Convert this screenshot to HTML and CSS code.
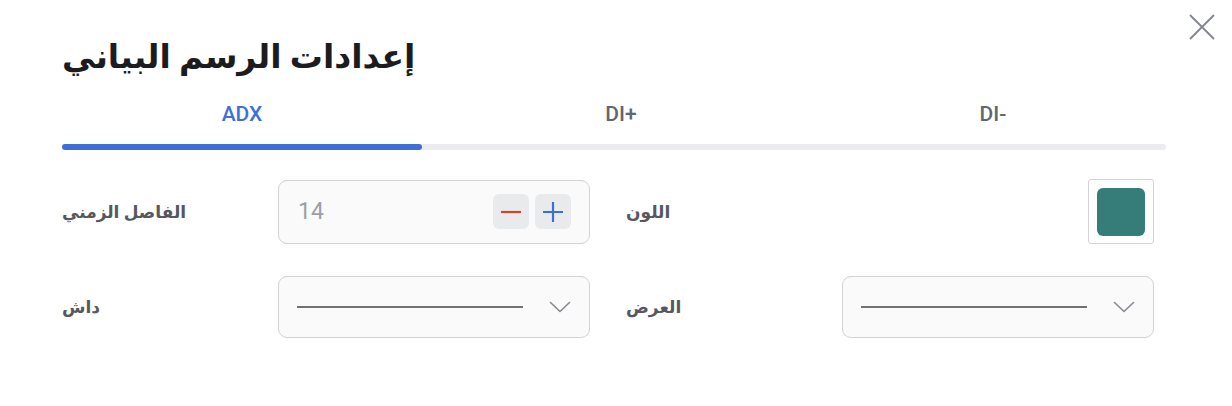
FILE: index.html
```html
<!DOCTYPE html>
<html lang="ar">
<head>
<meta charset="utf-8">
<title>إعدادات الرسم البياني</title>
<link rel="stylesheet" href="styles.css">
</head>
<body>
<div class="dialog">
  <button class="close" aria-label="إغلاق">
    <svg width="26" height="26" viewBox="0 0 26 26"><path d="M1.5 1.5 L24.5 24.5 M24.5 1.5 L1.5 24.5" stroke="#80848c" stroke-width="1.8" fill="none" stroke-linecap="round"/></svg>
  </button>
  <h1 class="title">إعدادات الرسم البياني</h1>
  <div class="tabs">
    <div class="tab active">ADX</div>
    <div class="tab">DI+</div>
    <div class="tab">DI-</div>
  </div>
  <div class="track"><div class="indicator"></div></div>
  <div class="form">
    <div class="field">
      <span class="label">الفاصل الزمني</span>
      <div class="control stepper">
        <span class="value">14</span>
        <div class="steps">
          <span class="step minus"><svg width="20" height="20" viewBox="0 0 20 20"><path d="M0 10 H20" stroke="#d1462b" stroke-width="2.2"/></svg></span>
          <span class="step plus"><svg width="20" height="20" viewBox="0 0 20 20"><path d="M0 10 H20 M10 0 V20" stroke="#3a6fd3" stroke-width="2.2"/></svg></span>
        </div>
      </div>
    </div>
    <div class="field">
      <span class="label">اللون</span>
      <div class="swatch-box"><div class="swatch"></div></div>
    </div>
    <div class="field">
      <span class="label">داش</span>
      <div class="control select">
        <span class="line"></span>
        <svg class="chev" width="22" height="12" viewBox="0 0 22 12"><path d="M1.5 1.5 L11 10.5 L20.5 1.5" stroke="#858991" stroke-width="1.6" fill="none" stroke-linecap="round" stroke-linejoin="round"/></svg>
      </div>
    </div>
    <div class="field">
      <span class="label">العرض</span>
      <div class="control select">
        <span class="line"></span>
        <svg class="chev" width="22" height="12" viewBox="0 0 22 12"><path d="M1.5 1.5 L11 10.5 L20.5 1.5" stroke="#858991" stroke-width="1.6" fill="none" stroke-linecap="round" stroke-linejoin="round"/></svg>
      </div>
    </div>
  </div>
</div>
</body>
</html>
```

FILE: styles.css
```css
* { box-sizing: border-box; }
html, body { margin: 0; padding: 0; background: #ffffff; }
body { font-family: Roboto, "DejaVu Sans", sans-serif; width: 1232px; height: 406px; overflow: hidden; }

.dialog {
  position: relative;
  padding: 34px 66px 0 62px;
  direction: ltr;
}

.close {
  position: absolute;
  top: 14px;
  left: 1189px;
  width: 26px;
  height: 26px;
  padding: 0;
  border: 0;
  background: transparent;
  display: flex;
}

.title {
  margin: 0;
  font-size: 33px;
  line-height: 46px;
  font-weight: 700;
  color: #1c1c20;
  text-align: left;
}

.tabs {
  display: grid;
  grid-template-columns: 360px 398px 1fr;
  margin-top: 12px;
  height: 44px;
}
.tab {
  display: flex;
  align-items: center;
  justify-content: center;
  font-size: 21px;
  font-weight: 500;
  color: #62666f;
}
.tab.active { color: #3e70d8; }

.track {
  margin-top: 8px;
  height: 6px;
  border-radius: 3px;
  background: #ececee;
}
.indicator {
  width: 360px;
  height: 6px;
  border-radius: 3px;
  background: #3d6fd6;
}

.form {
  margin-top: 29px;
  display: grid;
  grid-template-columns: 528px 528px;
  column-gap: 36px;
  row-gap: 32px;
  width: 1092px;
}
.field {
  display: grid;
  grid-template-columns: 216px 1fr;
  align-items: center;
}
.label {
  font-size: 17px;
  font-weight: 700;
  color: #55585f;
  text-align: left;
}

.control {
  height: 64px;
  border: 1px solid #d3d3d6;
  border-radius: 9px;
  background: #fafafa;
  display: flex;
  align-items: center;
}
.stepper {
  justify-content: space-between;
  padding: 0 18px 0 19px;
}
.value {
  font-size: 23px;
  color: #9c9fa6;
}
.steps { display: flex; gap: 6px; }
.step {
  width: 36px;
  height: 35px;
  border-radius: 6px;
  background: #e9eaec;
  display: flex;
  align-items: center;
  justify-content: center;
}

.swatch-box {
  justify-self: end;
  width: 66px;
  height: 65px;
  border: 1px solid #d3d3d6;
  border-radius: 3px;
  background: #ffffff;
  display: flex;
  align-items: center;
  justify-content: center;
}
.swatch {
  width: 48px;
  height: 48px;
  border-radius: 6px;
  background: #367d7a;
}

.select {
  height: 62px;
  padding: 0 18px 0 18px;
  gap: 26px;
}
.line {
  flex: 1;
  height: 2px;
  background: #717171;
}
.chev { flex: none; }
```
